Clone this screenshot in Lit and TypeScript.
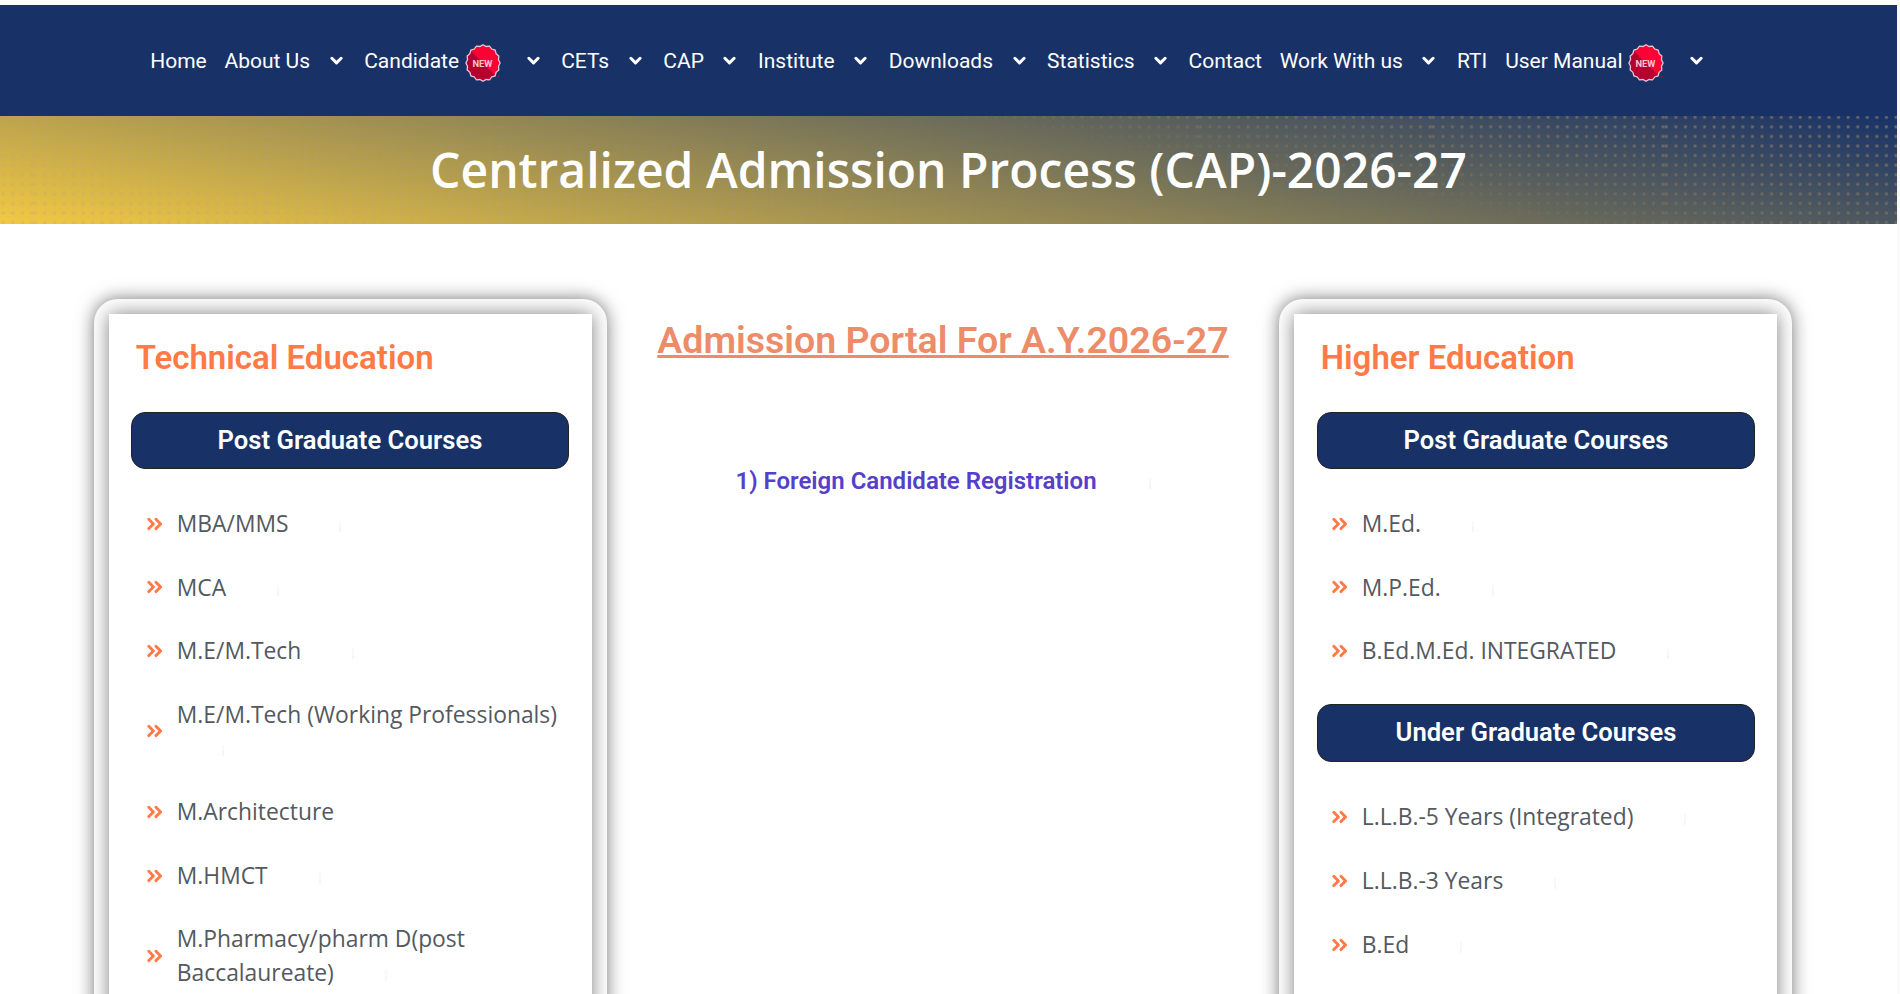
import { LitElement, html, css, svg, nothing } from "lit";
import { customElement, property } from "lit/decorators.js";

interface NavItem {
  label: string;
  menu?: boolean;
  fresh?: boolean;
}

interface Course {
  name: string;
  mark?: boolean;
}

interface Section {
  title: string;
  courses: Course[];
}

const NAV: NavItem[] = [
  { label: "Home" },
  { label: "About Us", menu: true },
  { label: "Candidate", menu: true, fresh: true },
  { label: "CETs", menu: true },
  { label: "CAP", menu: true },
  { label: "Institute", menu: true },
  { label: "Downloads", menu: true },
  { label: "Statistics", menu: true },
  { label: "Contact" },
  { label: "Work With us", menu: true },
  { label: "RTI" },
  { label: "User Manual", menu: true, fresh: true },
];

const TECHNICAL: Section[] = [
  {
    title: "Post Graduate Courses",
    courses: [
      { name: "MBA/MMS", mark: true },
      { name: "MCA", mark: true },
      { name: "M.E/M.Tech", mark: true },
      { name: "M.E/M.Tech (Working Professionals)", mark: true },
      { name: "M.Architecture" },
      { name: "M.HMCT", mark: true },
      { name: "M.Pharmacy/pharm D(post Baccalaureate)", mark: true },
    ],
  },
];

const HIGHER: Section[] = [
  {
    title: "Post Graduate Courses",
    courses: [
      { name: "M.Ed.", mark: true },
      { name: "M.P.Ed.", mark: true },
      { name: "B.Ed.M.Ed. INTEGRATED", mark: true },
    ],
  },
  {
    title: "Under Graduate Courses",
    courses: [
      { name: "L.L.B.-5 Years (Integrated)", mark: true },
      { name: "L.L.B.-3 Years", mark: true },
      { name: "B.Ed", mark: true },
    ],
  },
];

/* Outline of the scalloped seal: alternating outer and inner radii. */
const SEAL = Array.from({ length: 32 }, (_, i) => {
  const r = i % 2 ? 16.8 : 18.2;
  const a = (i * Math.PI) / 16;
  return `${(18 + r * Math.sin(a) * 0.94).toFixed(2)},${(19 - r * Math.cos(a)).toFixed(2)}`;
}).join(" ");

@customElement("new-badge")
class NewBadge extends LitElement {
  static styles = css`
    :host {
      display: block;
      width: 36px;
      height: 38px;
    }
    .seal {
      display: block;
      overflow: visible;
    }
    .word {
      font: 700 9.5px "Roboto", sans-serif;
      fill: #ffc4d0;
    }
  `;
  render() {
    return html`<svg class="seal" width="36" height="38" viewBox="0 0 36 38">
      <defs>
        <clipPath id="c"><polygon points=${SEAL} /></clipPath>
      </defs>
      <polygon points=${SEAL} fill="#ff0035" />
      <path d="M5 6 L31 32 L31 38 L0 38 L0 6 Z" fill="#b5002f" clip-path="url(#c)" />
      <polygon points=${SEAL} fill="none" stroke="#e6c6d2" stroke-width="1.3" />
      <circle cx="33.6" cy="32.8" r="1" fill="#c00030" />
      <text class="word" x="17.5" y="22.6" text-anchor="middle" textLength="20" lengthAdjust="spacingAndGlyphs">NEW</text>
    </svg>`;
  }
}

@customElement("site-nav")
class SiteNav extends LitElement {
  static styles = css`
    :host {
      display: block;
      background: #183268;
      height: 111px;
      font: 400 21px/30px "Roboto", sans-serif;
      color: #fff;
    }
    .bar {
      display: flex;
      align-items: center;
      height: 111px;
      padding-left: 150.2px;
    }
    .item {
      display: flex;
      align-items: center;
      flex: none;
      margin-right: 17.8px;
      white-space: nowrap;
    }
    .item.menu {
      margin-right: 21.6px;
    }
    .arrow {
      display: block;
      margin-left: 19.5px;
    }
    .badge {
      margin: 5px 0 0 5.5px;
    }
    .badge + .arrow {
      margin-left: 26px;
    }
  `;
  render() {
    return html`<nav class="bar">
      ${NAV.map(
        (n) => html`<div class="item ${n.menu ? "menu" : ""}">
          <span>${n.label}</span>${n.fresh ? html`<new-badge class="badge"></new-badge>` : nothing}${n.menu
            ? html`<svg class="arrow" width="13" height="10" viewBox="0 0 13 10">
                <path d="M1.9 2.3 L6.5 6.9 L11.1 2.3" fill="none" stroke="#fff" stroke-width="3" stroke-linecap="round" stroke-linejoin="round" />
              </svg>`
            : nothing}
        </div>`
      )}
    </nav>`;
  }
}

@customElement("title-banner")
class TitleBanner extends LitElement {
  static styles = css`
    :host {
      display: grid;
      height: 108px;
      background: linear-gradient(10deg, #f2c943 0%, #183268 100%);
    }
    .dots,
    .title {
      grid-area: 1 / 1;
    }
    .dots {
      display: block;
      width: 1897px;
      height: 108px;
    }
    .title {
      margin: 0;
      z-index: 1;
      text-align: center;
      font: 600 48px/108px "Open Sans", sans-serif;
      color: #fff;
    }
  `;
  render() {
    const cols = Array.from({ length: 25 }, (_, i) => i);
    return html`<svg class="dots" viewBox="0 0 1897 108">
        <defs>
          <pattern id="p" x="33.7" y="-3.5" width="233" height="9.57" patternUnits="userSpaceOnUse">
            ${cols.map((i) => svg`<rect x=${(0.2 + i * 9.57).toFixed(2)} y="3.4" width="2.8" height="2.8" fill="#fff" />`)}
          </pattern>
          <mask id="m"><rect width="1897" height="108" fill="url(#p)" /></mask>
          <linearGradient id="g" gradientUnits="userSpaceOnUse" x1="910.6" y1="269" x2="986.4" y2="-161">
            <stop offset="0" stop-color="#e2b95c" />
            <stop offset=".22" stop-color="#c2a562" />
            <stop offset=".42" stop-color="#988962" />
            <stop offset=".6" stop-color="#6f6c60" />
            <stop offset="1" stop-color="#6e6b64" />
          </linearGradient>
        </defs>
        <rect width="1897" height="108" fill="url(#g)" mask="url(#m)" />
      </svg>
      <h1 class="title">Centralized Admission Process (CAP)-2026-27</h1>`;
  }
}

@customElement("course-card")
class CourseCard extends LitElement {
  @property() heading = "";
  @property({ attribute: false }) sections: Section[] = [];

  static styles = css`
    :host {
      display: block;
      box-sizing: border-box;
      width: 513px;
      height: 900px;
      padding: 15px;
      border-radius: 24px;
      background: #fff;
      box-shadow: 0 0 18px rgba(0, 0, 0, 0.5);
    }
    .panel {
      box-sizing: border-box;
      height: 870px;
      padding: 22px 23px 0 22px;
      background: #fff;
      box-shadow: 0 0 18px rgba(0, 0, 0, 0.5);
    }
    .heading {
      margin: 0 0 32px 4.7px;
      font: 600 33px/44px "Roboto", sans-serif;
      color: #ff7a47;
    }
    .band {
      box-sizing: border-box;
      height: 57px;
      margin: 0 calc(-1 * var(--shift, 0px)) 0 var(--shift, 0px);
      border: 1px solid #222;
      border-radius: 14px;
      background: #183268;
      color: #fff;
      text-align: center;
      font: 600 25.6px/54px "Roboto", sans-serif;
    }
    .list + .band {
      height: 58px;
    }
    .list {
      margin: 0;
      padding: 37.6px 0 6.4px 15.8px;
      list-style: none;
    }
    .row {
      display: flex;
      align-items: center;
      gap: 14px;
      min-height: 34px;
      margin-bottom: 29.8px;
      color: #54595f;
      font: 400 22.85px/33.5px "Open Sans", sans-serif;
    }
    .chev {
      flex: none;
      display: block;
    }
    .mark {
      display: inline-block;
      width: 2px;
      height: 11px;
      margin-left: 45px;
      background: linear-gradient(#f6fcf2 55%, #fdf3f5 55%);
    }
  `;
  render() {
    return html`<section class="panel">
      <h2 class="heading">${this.heading}</h2>
      ${this.sections.map(
        (s) => html`<h3 class="band">${s.title}</h3>
          <ul class="list">
            ${s.courses.map(
              (c) => html`<li class="row">
                <svg class="chev" width="16" height="14" viewBox="0 0 16 14">
                  <path d="M1.8 2.2 L6.4 6.9 L1.8 11.6 M9 2.2 L13.6 6.9 L9 11.6" fill="none" stroke="#ff7a47" stroke-width="2.9" stroke-linecap="round" stroke-linejoin="round" />
                </svg>
                <span>${c.name}${c.mark ? html` <i class="mark"></i>` : nothing}</span>
              </li>`
            )}
          </ul>`
      )}
    </section>`;
  }
}

@customElement("app-root")
class AppRoot extends LitElement {
  static styles = css`
    :host {
      display: block;
      height: 994px;
      overflow: hidden;
      background: #fafafa;
    }
    .page {
      box-sizing: border-box;
      width: 1897px;
      height: 994px;
      padding-top: 5px;
      background: #fff;
    }
    .columns {
      display: flex;
      align-items: flex-start;
      padding: 75px 105px 0 94px;
    }
    .higher {
      --shift: 1px;
    }
    .center {
      flex: 1;
      display: flex;
      flex-direction: column;
      align-items: center;
      font-family: "Roboto", sans-serif;
    }
    .portal {
      margin: 16px 0 0;
      font-size: 37.5px;
      font-weight: 600;
      line-height: 50px;
      color: #ec8c69;
      text-decoration: underline;
    }
    .link {
      display: flex;
      align-items: center;
      margin: 98px 0 0;
      font-size: 24px;
      font-weight: 600;
      line-height: 36px;
      color: #5540cc;
    }
    .mark {
      width: 2px;
      height: 11px;
      margin: 5px 0 0 52px;
      background: linear-gradient(#f6fcf2 55%, #fdf3f5 55%);
    }
  `;
  render() {
    return html`<div class="page">
      <site-nav></site-nav>
      <title-banner></title-banner>
      <main class="columns">
        <course-card heading="Technical Education" .sections=${TECHNICAL}></course-card>
        <div class="center">
          <h2 class="portal">Admission Portal For A.Y.2026-27</h2>
          <div class="link">1) Foreign Candidate Registration<i class="mark"></i></div>
        </div>
        <course-card class="higher" heading="Higher Education" .sections=${HIGHER}></course-card>
      </main>
    </div>`;
  }
}
